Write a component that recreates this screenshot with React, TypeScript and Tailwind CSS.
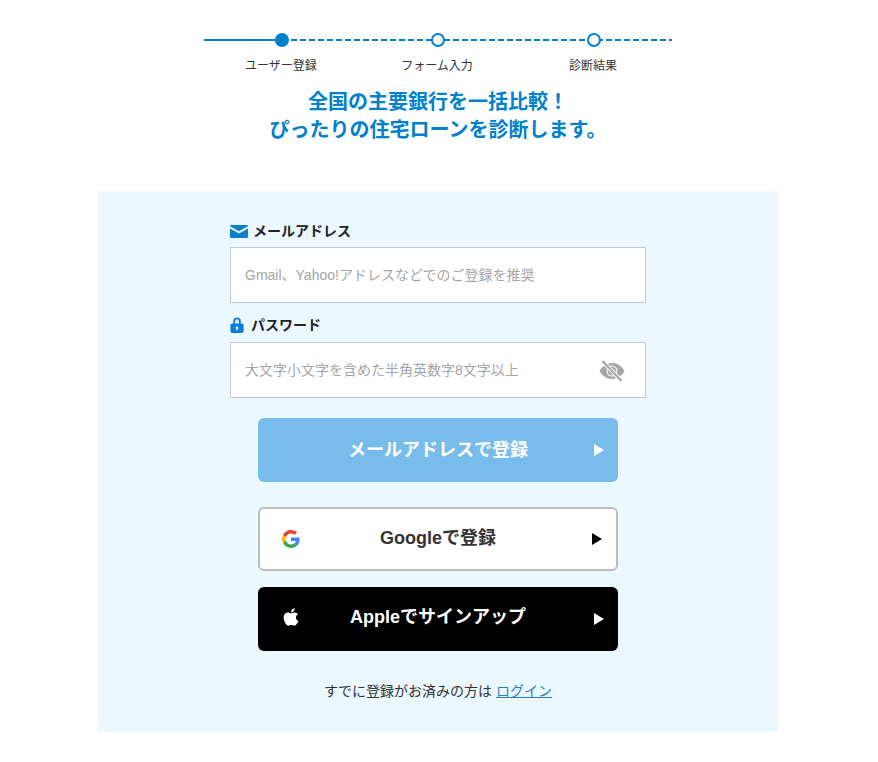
import React from "react";

const steps = ["ユーザー登録", "フォーム入力", "診断結果"];

const Arrow = ({color, top = "top-[26px]"}: {color: string; top?: string}) => (
  <svg width="10" height="12" viewBox="0 0 10 12" className={`absolute right-[14px] ${top}`}>
    <path d="M0 0L10 6L0 12Z" fill={color} />
  </svg>
);

const Stepper = () => (
  <div className="w-[468px] ml-[204px]">
    <div className="relative h-[16px] flex items-center">
      <div className="w-[78px] h-[2px] bg-[#0081cc]" />
      <div className="flex-1 h-[2px] bg-[repeating-linear-gradient(90deg,#0081cc_0,#0081cc_6px,transparent_6px,transparent_9px)]" />
      <div className="absolute inset-0 flex">
        {steps.map((label, i) => (
          <div key={label} className="w-[156px] flex items-center justify-center">
            <div
              className={`w-[14px] h-[14px] rounded-full border-2 border-[#0081cc] ${
                i === 0 ? "bg-[#0081cc]" : "bg-white"
              }`}
            />
          </div>
        ))}
      </div>
    </div>
    <div className="flex mt-[9px]">
      {steps.map((label) => (
        <div key={label} className="w-[156px] pr-[2px] text-center text-[12px] leading-[18px] text-[#333]">
          {label}
        </div>
      ))}
    </div>
  </div>
);

const MailIcon = () => (
  <svg width="18" height="13" viewBox="0 0 18 13" className="mr-[5px]">
    <path d="M0 1A1 1 0 0 1 1 0h16a1 1 0 0 1 1 1v.2L9 6.300 0 1.200Z" fill="#0a7fd0" />
    <path d="M0 3.500l9 5.100 9-5.100V12a1 1 0 0 1-1 1H1a1 1 0 0 1-1-1Z" fill="#0a7fd0" />
  </svg>
);

const LockIcon = () => (
  <svg width="14" height="16" viewBox="0 0 14 17" className="mr-[7px]">
    <path
      fillRule="evenodd"
      d="M3 7V4.5a4 4 0 0 1 8 0V7h1.2A1.8 1.8 0 0 1 14 8.8v6.4a1.8 1.8 0 0 1-1.8 1.8H1.8A1.8 1.8 0 0 1 0 15.2V8.8A1.8 1.8 0 0 1 1.8 7ZM5 7h4V4.5a2 2 0 0 0-4 0ZM7 10a1.5 1.5 0 0 0-.7 2.8V14h1.4v-1.2A1.5 1.5 0 0 0 7 10Z"
      fill="#0b7fdc"
    />
  </svg>
);

const EyeOff = () => (
  <svg width="26" height="22" viewBox="0 0 26 22" className="absolute right-[20px] top-[17px]">
    <path
      fillRule="evenodd"
      d="M13 3C7.500 3 3 6.500 .5 11 3 15.500 7.500 19 13 19s10-3.500 12.500-8C23 6.500 18.500 3 13 3Zm0 2.500a5.500 5.500 0 1 1 0 11 5.500 5.500 0 0 1 0-11Z"
      fill="#a6a6a6"
    />
    <circle cx="13" cy="11" r="4.500" fill="#a6a6a6" />
    <path d="M3.500 1L22.500 21" stroke="#ffffff" strokeWidth="4" />
    <path d="M3.500 1L22.500 21" stroke="#a6a6a6" strokeWidth="2.200" />
  </svg>
);

const GoogleIcon = () => (
  <svg width="18" height="18" viewBox="0 0 48 48" className="absolute left-[22px] top-[21px]">
    <path fill="#EA4335" d="M24 9.500c3.540 0 6.710 1.220 9.210 3.600l6.850-6.850C35.900 2.380 30.470 0 24 0 14.620 0 6.510 5.380 2.560 13.220l7.980 6.190C12.430 13.720 17.740 9.500 24 9.500z" />
    <path fill="#4285F4" d="M46.980 24.550c0-1.570-.15-3.090-.38-4.550H24v9.020h12.940c-.58 2.960-2.260 5.480-4.780 7.180l7.730 6c4.510-4.180 7.090-10.360 7.090-17.650z" />
    <path fill="#FBBC05" d="M10.530 28.590c-.48-1.450-.76-2.990-.76-4.590s.27-3.140.76-4.590l-7.980-6.190C.92 16.460 0 20.120 0 24c0 3.880.92 7.540 2.560 10.780l7.970-6.190z" />
    <path fill="#34A853" d="M24 48c6.480 0 11.930-2.130 15.890-5.810l-7.730-6c-2.150 1.450-4.920 2.300-8.160 2.300-6.260 0-11.570-4.220-13.470-9.910l-7.980 6.190C6.510 42.620 14.620 48 24 48z" />
  </svg>
);

const AppleIcon = () => (
  <svg width="18" height="20" viewBox="0 0 384 512" className="absolute left-[24px] top-[20px]">
    <path
      fill="#ffffff"
      d="M318.700 268.700c-.2-36.700 16.400-64.400 50-84.800-18.800-26.900-47.200-41.700-84.700-44.600-35.500-2.800-74.300 20.700-88.500 20.700-15 0-49.400-19.700-76.400-19.700C63.300 141.200 4 184.800 4 273.500q0 39.300 14.400 81.200c12.800 36.700 59 126.700 107.200 125.200 25.200-.6 43-17.900 75.800-17.900 31.800 0 48.300 17.900 76.400 17.900 48.600-.7 90.400-82.500 102.600-119.300-65.200-30.700-61.700-90-61.700-91.900zm-56.600-164.200c27.300-32.400 24.800-61.900 24-72.500-24.100 1.400-52 16.400-67.900 34.900-17.500 19.800-27.800 44.300-25.600 71.900 26.100 2 49.900-11.400 69.500-34.300z"
    />
  </svg>
);

const App = () => {
  return (
    <div
      className="w-[878px] h-[762px] bg-white pt-[32px] text-[#333]"
      style={{fontFamily: '"Liberation Sans", "Noto Sans CJK JP", sans-serif'}}
    >
      <Stepper />
      <h1 className="mt-[13px] ml-[204px] w-[468px] text-center text-[20px] leading-[28px] font-bold text-[#0081cc]">
        全国の主要銀行を一括比較！
        <br />
        ぴったりの住宅ローンを診断します。
      </h1>
      <div className="mt-[47px] ml-[98px] w-[680px] h-[541px] bg-[#ebf8ff] pt-[30px] flex flex-col items-center">
        <div className="w-[416px]">
          <label className="flex items-center h-[20px] mb-[6px] text-[14px] font-bold text-[#222]">
            <MailIcon />
            メールアドレス
          </label>
          <div className="h-[56px] bg-white border border-[#c4c8cc] px-[14px] flex items-center text-[14px] text-[#a5a5a5]">
            Gmail、Yahoo!アドレスなどでのご登録を推奨
          </div>
          <label className="flex items-center h-[20px] mt-[12px] mb-[7px] text-[14px] font-bold text-[#222]">
            <LockIcon />
            パスワード
          </label>
          <div className="relative h-[56px] bg-white border border-[#c4c8cc] px-[14px] flex items-center text-[14px] text-[#a5a5a5]">
            大文字小文字を含めた半角英数字8文字以上
            <EyeOff />
          </div>
        </div>
        <button className="relative mt-[20px] w-[360px] h-[64px] rounded-[6px] bg-[#78bcec] text-white text-[18px] font-bold">
          メールアドレスで登録
          <Arrow color="#ffffff" />
        </button>
        <button className="relative mt-[25px] w-[360px] h-[64px] pb-[2px] rounded-[6px] bg-white border-2 border-[#bcbcbc] text-[#333] text-[18px] font-bold">
          Googleで登録
          <GoogleIcon />
          <Arrow color="#000000" top="top-[24px]" />
        </button>
        <button className="relative mt-[16px] w-[360px] h-[64px] pb-[4px] rounded-[6px] bg-black text-white text-[18px] font-bold">
          Appleでサインアップ
          <AppleIcon />
          <Arrow color="#ffffff" />
        </button>
        <p className="mt-[30px] text-[14px] leading-[20px] text-[#333]">
          すでに登録がお済みの方は <a className="text-[#2a7fc0] underline">ログイン</a>
        </p>
      </div>
    </div>
  );
};

export default App;
